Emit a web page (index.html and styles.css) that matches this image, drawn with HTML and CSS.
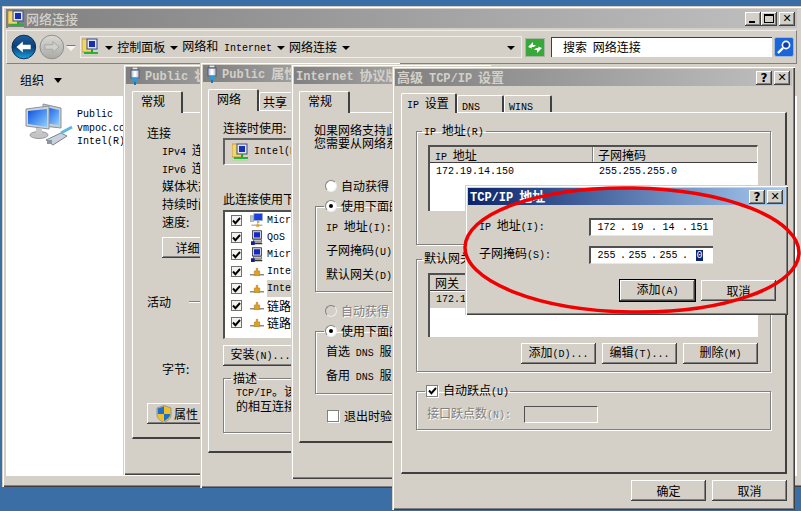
FILE: index.html
```html
<!DOCTYPE html>
<html lang="zh-CN">
<head>
<meta charset="utf-8">
<title>网络连接</title>
<link rel="stylesheet" href="styles.css">
</head>
<body>
<svg class="defs" width="0" height="0">
  <defs>
    <linearGradient id="gBlue" x1="0" y1="0" x2="0" y2="1"><stop offset="0" stop-color="#1d5f9e"/><stop offset=".5" stop-color="#0b3f78"/><stop offset="1" stop-color="#18a4e0"/></linearGradient>
    <linearGradient id="gGrey" x1="0" y1="0" x2="0" y2="1"><stop offset="0" stop-color="#d8d8d4"/><stop offset="1" stop-color="#a9a9a5"/></linearGradient>
    <linearGradient id="gScreen" x1="0" y1="0" x2="1" y2="1"><stop offset="0" stop-color="#0a4fe0"/><stop offset="1" stop-color="#8fd0ff"/></linearGradient>
    <symbol id="i-netfolder" viewBox="0 0 16 20">
      <path d="M0 2h5l1 1h4v12H0z" fill="#f4d56a" stroke="#a88a30" stroke-width=".7"/>
      <rect x="5" y="2" width="10" height="10" fill="#dfe6f2" stroke="#3a4a80"/>
      <rect x="7" y="4" width="6" height="6" fill="#1a2fb0"/>
      <rect x="9" y="12" width="2" height="3" fill="#28a030"/>
      <rect x="2" y="15" width="14" height="2" fill="#28b038"/>
      <rect x="0" y="18" width="16" height="1" fill="#b8d8a8"/>
    </symbol>
    <symbol id="i-adapter" viewBox="0 0 10 18">
      <rect x="2" y="0" width="6" height="3" fill="#e8e8e8" stroke="#667"/>
      <rect x="1" y="3" width="8" height="8" fill="#c8d4e0" stroke="#557"/>
      <rect x="3.5" y="4" width="3" height="6" fill="#fff"/>
      <path d="M2 11h6l-1 4H3z" fill="#2c9ad8"/>
      <rect x="4" y="15" width="2" height="3" fill="#1f74b4"/>
    </symbol>
    <symbol id="i-stack" viewBox="0 0 13 10">
      <path d="M0 8h13" stroke="#8a8a90" stroke-width="1.4"/>
      <path d="M4 8.800V4.500h1.800V2h1.400v2.500H9v4.300z" fill="#e0a020" stroke="#a87810" stroke-width=".5"/>
    </symbol>
    <symbol id="i-pc" viewBox="0 0 16 20">
      <rect x="2" y="1" width="12" height="11" fill="#cfd3da" stroke="#222"/>
      <rect x="4" y="3" width="8" height="7" fill="#1528c8"/>
      <rect x="3" y="13" width="11" height="3" fill="#c8c8c8" stroke="#222" stroke-width=".7"/>
      <rect x="0" y="15" width="5" height="5" fill="#1020a0"/>
      <rect x="4" y="17" width="11" height="2" fill="#333"/>
    </symbol>
    <symbol id="i-client" viewBox="0 0 18 18">
      <rect x="0" y="3" width="5" height="7" fill="#b8c4c8" stroke="#6a7a70" stroke-width=".6"/>
      <rect x="5" y="0" width="11" height="9" fill="#1e3fe0" stroke="#9ab" stroke-width=".8"/>
      <rect x="9" y="9" width="3" height="3" fill="#a8a8a0"/>
      <path d="M2 15h14" stroke="#888" stroke-width="1.200"/>
      <path d="M8 17v-3h1.500v-2h1v2H12v3z" fill="#e0a020"/>
    </symbol>
    <symbol id="i-check" viewBox="0 0 9 8">
      <path d="M1 3.500 3.400 6.200 8 1" fill="none" stroke="#000" stroke-width="1.900"/>
    </symbol>
  </defs>
</svg>

<section class="win main">
  <header class="title main-title">
    <svg class="ic-t"><use href="#i-netfolder"/></svg>
    <span class="title-text">网络连接</span>
    <div class="caps">
      <span class="cap"><i class="glyph-min"></i></span>
      <span class="cap"><i class="glyph-max"></i></span>
      <span class="cap cap-gap">✕</span>
    </div>
  </header>
  <div class="toolbar">
    <svg class="nav-back" width="26" height="26" viewBox="0 0 26 26">
      <circle cx="13" cy="13" r="12" fill="url(#gBlue)" stroke="#0a2c58"/>
      <path d="M5.500 13 12 7.500v3.200h8v4.600h-8v3.200z" fill="#fff"/>
    </svg>
    <svg class="nav-fwd" width="26" height="26" viewBox="0 0 26 26">
      <circle cx="13" cy="13" r="12" fill="url(#gGrey)" stroke="#8e8e8a"/>
      <path d="M20.500 13 14 7.500v3.200H6v4.600h8v3.200z" fill="#cfcfcb" stroke="#9a9a96" stroke-width=".7"/>
    </svg>
    <span class="nav-drop"></span>
    <div class="address">
      <svg class="ic-addr"><use href="#i-netfolder"/></svg>
      <span class="crumb-arrow first"></span><span class="crumb">控制面板</span>
      <span class="crumb-arrow"></span><span class="crumb">网络和 <span class="la">Internet</span></span>
      <span class="crumb-arrow"></span><span class="crumb">网络连接</span>
      <span class="crumb-arrow"></span>
      <span class="crumb-arrow addr-drop"></span>
    </div>
    <svg class="refresh" width="20" height="19" viewBox="0 0 20 19">
      <rect x=".5" y=".5" width="19" height="18" fill="#37a83a" stroke="#a8b8a0"/>
      <path d="M3 9 8 4v3h3l-2 2H6.500l.5 1.500zM17 10l-5 5v-3H9l2-2h2.500L13 8.500z" fill="#fff"/>
    </svg>
    <div class="search">搜索 网络连接</div>
    <svg class="search-btn" width="20" height="20" viewBox="0 0 20 20">
      <rect x=".5" y=".5" width="19" height="19" rx="2" fill="#1a66d8" stroke="#9fb8dc"/>
      <circle cx="12" cy="8" r="3.600" fill="#103aa8" stroke="#fff" stroke-width="1.600"/>
      <path d="M9 11 4 16" stroke="#fff" stroke-width="2.400"/>
    </svg>
  </div>
  <div class="orgbar"><span>组织</span><span class="org-arrow"></span></div>
  <div class="files">
    <svg class="net-big" width="48" height="48" viewBox="0 0 48 48">
      <path d="M18 1 36 5v20l-18-2z" fill="#c4ccd4" stroke="#8a929a"/>
      <path d="M20 4 34 7v15l-14-2z" fill="url(#gScreen)"/>
      <path d="M1 6 24 3v23L1 23z" fill="#cdd3da" stroke="#8a929a"/>
      <path d="M3 8 22 6v18L3 21z" fill="url(#gScreen)"/>
      <ellipse cx="14" cy="32" rx="9" ry="3.500" fill="#c4c4c4" stroke="#9a9a9a"/>
      <rect x="11" y="25" width="6" height="6" fill="#c8c8c8"/>
      <path d="M21 37 36 30l6 3-14 9z" fill="#c9d2dc" stroke="#7a8490"/>
      <path d="M22 37h5v4h-5z" fill="#8a96a4"/>
      <path d="M36 30 47 24" stroke="#5cb8e6" stroke-width="3"/>
    </svg>
    <div class="file-text">
      <div class="la">Public</div>
      <div class="la">vmpoc.com</div>
      <div class="la">Intel(R)</div>
    </div>
  </div>
</section>

<section class="win w1">
  <header class="title"><svg class="ic-plug"><use href="#i-adapter"/></svg><span class="title-text"><span class="la">Public</span> 状态</span></header>
  <div class="tabs"><span class="tab on">常规</span></div>
  <div class="page p1">
    <div class="line">连接</div>
    <div class="stat"><span class="la">IPv4</span> 连接:</div>
    <div class="stat"><span class="la">IPv6</span> 连接:</div>
    <div class="stat">媒体状态:</div>
    <div class="stat">持续时间:</div>
    <div class="stat">速度:</div>
    <button class="btn btn-detail">详细信息</button>
    <div class="line ruled">活动</div>
    <div class="stat bytes">字节:</div>
    <button class="btn btn-prop">
      <svg width="16" height="18" viewBox="0 0 16 18"><path d="M8 .5 15 3v7c0 4-4 6-7 7.500C5 16 1 14 1 10V3z" fill="#f0c020" stroke="#8a98a8"/><path d="M8 1.500V9H1.800V3.500zM8 9h6.200c0 3.500-3.400 5.500-6.200 7z" fill="#1f6fd0"/></svg>
      <span>属性</span>
    </button>
  </div>
</section>

<section class="win w2">
  <header class="title"><svg class="ic-plug"><use href="#i-adapter"/></svg><span class="title-text"><span class="la">Public</span> 属性</span></header>
  <div class="tabs"><span class="tab on">网络</span><span class="tab">共享</span></div>
  <div class="page p2">
    <div class="line">连接时使用:</div>
    <div class="adapter-box">
      <svg class="ic-t"><use href="#i-netfolder"/></svg>
      <span class="la">Intel(R)</span>
    </div>
    <div class="line list-cap">此连接使用下列项目</div>
    <ul class="items">
      <li><span class="cb"><svg><use href="#i-check"/></svg></span><svg class="it"><use href="#i-client"/></svg><span class="la">Microsoft</span></li>
      <li><span class="cb"><svg><use href="#i-check"/></svg></span><svg class="it"><use href="#i-pc"/></svg><span class="la">QoS</span></li>
      <li><span class="cb"><svg><use href="#i-check"/></svg></span><svg class="it"><use href="#i-pc"/></svg><span class="la">Microsoft</span></li>
      <li><span class="cb"><svg><use href="#i-check"/></svg></span><svg class="it"><use href="#i-stack"/></svg><span class="la">Internet</span></li>
      <li><span class="cb"><svg><use href="#i-check"/></svg></span><svg class="it"><use href="#i-stack"/></svg><span class="la sel">Internet</span></li>
      <li><span class="cb"><svg><use href="#i-check"/></svg></span><svg class="it"><use href="#i-stack"/></svg><span>链路层</span></li>
      <li><span class="cb"><svg><use href="#i-check"/></svg></span><svg class="it"><use href="#i-stack"/></svg><span>链路层</span></li>
    </ul>
    <button class="btn btn-install">安装<span class="la">(N)...</span></button>
    <fieldset class="grp grp-desc">
      <legend>描述</legend>
      <p class="desc"><span class="la">TCP/IP</span>。该协议<br>的相互连接</p>
    </fieldset>
  </div>
</section>

<section class="win w3">
  <header class="title"><span class="title-text"><span class="la">Internet</span> 协议版本</span></header>
  <div class="tabs"><span class="tab on">常规</span></div>
  <div class="page p3">
    <p class="intro">如果网络支持此功能<br>您需要从网络系统</p>
    <div class="radio-row r-auto"><span class="radio"></span><span>自动获得</span></div>
    <fieldset class="grp grp-ip">
      <legend class="radio-row"><span class="radio on"></span><span>使用下面的</span></legend>
      <div class="frow"><span class="la">IP</span> 地址<span class="la">(I):</span></div>
      <div class="frow">子网掩码<span class="la">(U):</span></div>
      <div class="frow">默认网关<span class="la">(D):</span></div>
    </fieldset>
    <div class="radio-row r-dns off"><span class="radio"></span><span>自动获得</span></div>
    <fieldset class="grp grp-dns">
      <legend class="radio-row"><span class="radio on"></span><span>使用下面的</span></legend>
      <div class="frow">首选 <span class="la">DNS</span> 服务器</div>
      <div class="frow">备用 <span class="la">DNS</span> 服务器</div>
    </fieldset>
    <div class="radio-row r-exit"><span class="cb light"></span><span>退出时验证</span></div>
  </div>
</section>

<section class="win w4">
  <header class="title">
    <span class="title-text">高级 <span class="la">TCP/IP</span> 设置</span>
    <div class="caps"><span class="cap q">?</span><span class="cap cap-gap">✕</span></div>
  </header>
  <div class="tabs">
    <span class="tab on"><span class="la">IP</span> 设置</span>
    <span class="tab t-dns"><span class="la">DNS</span></span>
    <span class="tab t-wins"><span class="la">WINS</span></span>
  </div>
  <div class="page p4">
    <fieldset class="grp g-ip">
      <legend><span class="la">IP</span> 地址<span class="la">(R)</span></legend>
      <div class="list l-ip">
        <div class="lhead"><span class="c1"><span class="la">IP</span> 地址</span><span class="c2">子网掩码</span></div>
        <div class="lrow"><span class="c1 num">172.19.14.150</span><span class="c2 num">255.255.255.0</span></div>
      </div>
    </fieldset>
    <fieldset class="grp g-gw">
      <legend>默认网关<span class="la">(F):</span></legend>
      <div class="list l-gw">
        <div class="lhead"><span class="c1">网关</span><span class="c2">跃点数</span></div>
        <div class="lrow picked"><span class="c1 num">172.19.14.1</span><span class="c2 num">自动</span></div>
      </div>
      <div class="btn-row">
        <button class="btn">添加<span class="la">(D)...</span></button>
        <button class="btn">编辑<span class="la">(T)...</span></button>
        <button class="btn">删除<span class="la">(M)</span></button>
      </div>
    </fieldset>
    <fieldset class="grp g-hop">
      <legend class="radio-row"><span class="cb light"><svg><use href="#i-check"/></svg></span><span>自动跃点<span class="la">(U)</span></span></legend>
      <div class="hop-row">
        <span class="hop-label">接口跃点数<span class="la">(N):</span></span>
        <span class="hop-input"></span>
      </div>
    </fieldset>
  </div>
  <div class="foot">
    <button class="btn">确定</button>
    <button class="btn">取消</button>
  </div>
</section>

<section class="win dlg">
  <header class="title active">
    <span class="title-text"><span class="la">TCP/IP</span> 地址</span>
    <div class="caps"><span class="cap q">?</span><span class="cap cap-gap">✕</span></div>
  </header>
  <div class="dlg-row first">
    <label class="dlg-label"><span class="la">IP</span> 地址<span class="la">(I):</span></label>
    <div class="ipbox">
      <span class="oct">172</span><span class="dot">.</span><span class="oct">19</span><span class="dot">.</span><span class="oct">14</span><span class="dot">.</span><span class="oct">151</span>
    </div>
  </div>
  <div class="dlg-row">
    <label class="dlg-label">子网掩码<span class="la">(S):</span></label>
    <div class="ipbox">
      <span class="oct">255</span><span class="dot">.</span><span class="oct">255</span><span class="dot">.</span><span class="oct">255</span><span class="dot">.</span><span class="oct"><b class="hl">0</b></span>
    </div>
  </div>
  <div class="dlg-foot">
    <button class="btn default">添加<span class="la">(A)</span></button>
    <button class="btn">取消</button>
  </div>
</section>

<svg class="mark" width="801" height="511" viewBox="0 0 801 511">
  <ellipse cx="632" cy="250" rx="167" ry="62" transform="rotate(1 632 250)" fill="none" stroke="#f00000" stroke-width="3.500"/>
</svg>
</body>
</html>
```

FILE: styles.css
```css
* { box-sizing: border-box; }
html, body { margin: 0; height: 100%; }
body {
  position: relative;
  width: 801px;
  height: 511px;
  overflow: hidden;
  background: #3a6ea5;
  font-family: "Noto Sans CJK SC", "Liberation Sans", sans-serif;
  font-size: 12px;
  line-height: 16px;
  word-spacing: 3px;
  color: #000;
}
.defs { position: absolute; }
.la { font-family: "Liberation Mono", monospace; font-size: 10px; word-spacing: 0; }
p { margin: 0; }
ul { margin: 0; padding: 0; list-style: none; }

.win {
  position: absolute;
  display: flex;
  flex-direction: column;
  padding: 3px;
  background: #d4d0c8;
  box-shadow: inset 1px 1px #d4d0c8, inset 2px 2px #fff, inset -1px -1px #404040, inset -2px -2px #808080;
}
.main { left: 2px; top: 6px; width: 805px; height: 481px; padding: 3px 10px 11px 4px; }
.w1 { left: 123px; top: 64px; width: 200px; height: 411px; padding: 3px 0 0 3px; }
.w2 { left: 200px; top: 62px; width: 200px; height: 426px; padding: 3px 0 0 3px; }
.w3 { left: 291px; top: 64px; width: 200px; height: 415px; padding: 3px 0 0 3px; }
.w4 { left: 392px; top: 66px; width: 403px; height: 444px; }
.dlg { left: 465px; top: 185px; width: 323px; height: 130px; }

.title {
  flex: none;
  display: flex;
  align-items: center;
  height: 17px;
  padding-left: 2px;
  background: linear-gradient(90deg, #808080, #c0c0c0);
  color: #d4d0c8;
  font-size: 13px;
  font-weight: 700;
}
.title .la { font-size: 12px; }
.title.active { background: linear-gradient(90deg, #0a246a, #a6caf0); color: #fff; }
.main-title { height: 19px; font-weight: 500; }
.ic-t { width: 16px; height: 20px; margin-right: 2px; flex: none; }
.ic-plug { width: 10px; height: 18px; margin: 0 5px 0 2px; flex: none; }
.caps { margin-left: auto; display: flex; padding-right: 2px; }
.cap {
  width: 16px;
  height: 14px;
  display: flex;
  align-items: center;
  justify-content: center;
  background: #d4d0c8;
  color: #000;
  font: 700 11px/14px "DejaVu Sans", sans-serif;
  box-shadow: inset -1px -1px #404040, inset 1px 1px #fff, inset -2px -2px #808080;
}
.cap-gap { margin-left: 2px; }
.q { font-size: 12px; }
.glyph-min { width: 6px; height: 2px; background: #000; margin-top: 7px; margin-right: 3px; }
.glyph-max { width: 10px; height: 9px; border: 1px solid #000; border-top-width: 2px; }

.toolbar {
  flex: none;
  display: flex;
  align-items: center;
  height: 34px;
  margin-top: 2px;
  padding: 0 2px 0 4px;
  border: 1px solid #f0eee8;
  border-right-color: #808080;
  border-bottom-color: #808080;
}
.nav-fwd { margin-left: 2px; }
.nav-drop {
  width: 0;
  height: 0;
  margin: 3px 2px 0 2px;
  border: 5px solid transparent;
  border-top: 5px solid #f4f4f4;
  border-bottom: 0;
  filter: drop-shadow(0 -1px #777);
}
.address {
  display: flex;
  align-items: center;
  width: 448px;
  height: 22px;
  margin-left: 2px;
  border: 1px solid #efede6;
  white-space: nowrap;
}
.ic-addr { width: 16px; height: 20px; margin-left: 1px; flex: none; }
.crumb-arrow { width: 0; height: 0; margin: 2px 4px 0 5px; border: 4px solid transparent; border-top: 4px solid #000; border-bottom: 0; }
.crumb-arrow.first { margin-left: 7px; }
.addr-drop { margin-left: auto; margin-right: 6px; }
.refresh { margin-left: 3px; flex: none; }
.search {
  width: 221px;
  height: 20px;
  margin-left: 6px;
  padding-left: 11px;
  background: #fff;
  border-top: 1px solid #404040;
  border-left: 1px solid #404040;
  line-height: 18px;
  flex: none;
}
.search-btn { margin-left: 2px; flex: none; }
.orgbar { flex: none; display: flex; align-items: center; height: 32px; padding-left: 14px; }
.org-arrow { margin-left: 10px; border: 4px solid transparent; border-top: 5px solid #000; border-bottom: 0; }
.files { flex: 1; display: flex; background: #fff; padding: 7px 0 0 19px; }
.net-big { flex: none; }
.file-text { margin: 5px 0 0 4px; line-height: 13.500px; }

.tabs { flex: none; display: flex; align-items: flex-end; height: 21px; margin: 7px 0 0 6px; }
.tab {
  height: 18px;
  width: 41px;
  padding-left: 3px;
  border-top: 1px solid #fff;
  border-left: 1px solid #fff;
  border-right: 2px solid #404040;
  border-radius: 2px 2px 0 0;
  line-height: 17px;
  white-space: nowrap;
  background: #d4d0c8;
}
.tab.on { height: 22px; width: 51px; padding-left: 8px; line-height: 18px; position: relative; z-index: 1; margin-bottom: -1px; }
.page {
  flex: none;
  border-top: 1px solid #fff;
  border-left: 1px solid #fff;
  border-right: 2px solid #404040;
  border-bottom: 2px solid #404040;
}
.w1 .page { margin-left: 6px; height: 327px; padding: 12px 0 0 14px; }
.w1 .tabs { margin-left: 6px; }
.w2 .tabs { margin-left: 5px; }
.w2 .page { margin-left: 5px; height: 343px; padding: 9px 0 0 14px; }
.w3 .tabs { margin-left: 5px; }
.w3 .page { margin-left: 5px; height: 331px; padding: 10px 0 0 15px; }
.w4 .tabs { margin-left: 6px; height: 19px; }
.w4 .tab { height: 17px; width: 48px; padding-left: 4px; }
.w4 .tab.on { height: 20px; width: 56px; padding-left: 5px; line-height: 17px; }
.w4 .tab.t-dns { width: 47px; }
.w4 .page { margin-left: 6px; width: 386px; height: 362px; padding: 10px 0 0 14px; }

.line { height: 16px; white-space: nowrap; }
.stat { height: 18px; margin-left: 15px; line-height: 18px; white-space: nowrap; }
.btn {
  display: block;
  width: 75px;
  height: 21px;
  padding: 0;
  border: 0;
  background: #d4d0c8;
  color: #000;
  font: inherit;
  text-align: center;
  white-space: nowrap;
  box-shadow: inset -1px -1px #404040, inset 1px 1px #fff, inset -2px -2px #808080;
}
.btn-detail { margin: 6px 0 0 15px; }
.ruled { display: flex; align-items: center; margin-top: 36px; }
.ruled::after { content: ""; flex: 1; height: 2px; margin-left: 18px; background: linear-gradient(#808080 50%, #fff 50%); }
.bytes { margin-top: 50px; }
.btn-prop { display: flex; align-items: center; gap: 2px; margin-top: 25px; padding-left: 9px; }

.adapter-box {
  display: flex;
  align-items: center;
  height: 27px;
  margin-top: 2px;
  padding-left: 7px;
  background: #d4d0c8;
  border-top: 2px solid #606060;
  border-left: 2px solid #606060;
  border-bottom: 1px solid #fff;
  gap: 4px;
}
.list-cap { margin-top: 26px; }
.items {
  height: 129px;
  margin-top: 3px;
  background: #fff;
  border-top: 2px solid #505050;
  border-left: 2px solid #505050;
  border-bottom: 1px solid #d4d0c8;
}
.items li { display: flex; align-items: center; height: 17px; padding-left: 6px; white-space: nowrap; }
.cb {
  flex: none;
  display: flex;
  align-items: center;
  justify-content: center;
  width: 11px;
  height: 11px;
  background: #f4f2ee;
  border: 1px solid #707070;
}
.cb svg { width: 9px; height: 8px; }
.cb.light { width: 12px; height: 12px; background: #fff; border-color: #808080; box-shadow: 1px 1px #fff; }
.it { flex: none; width: 14px; height: 15px; margin: 0 3px 0 8px; }
.sel { background: #d4d0c8; align-self: stretch; line-height: 17px; padding-right: 60px; }
.btn-install { margin-top: 6px; }

.grp { min-width: 0; margin: 0; padding: 0; border: 1px solid #808080; box-shadow: inset 1px 1px #fff, 1px 1px #fff; }
.grp legend { padding: 0 2px; margin-left: 7px; line-height: 14px; white-space: nowrap; }
.g-ip legend, .g-gw legend { margin-left: 5px; }
.grp-desc { height: 62px; margin-top: 5px; }
.desc { padding: 0 0 0 12px; line-height: 12px; white-space: nowrap; }

.intro { margin-left: -1px; line-height: 13px; white-space: nowrap; }
.radio-row { display: flex; align-items: center; height: 16px; gap: 4px; white-space: nowrap; }
.radio {
  flex: none;
  width: 12px;
  height: 12px;
  border-radius: 50%;
  background: #fff;
  border: 1px solid #808080;
  border-right-color: #eee;
  border-bottom-color: #eee;
  display: flex;
  align-items: center;
  justify-content: center;
}
.radio.on::after { content: ""; width: 4px; height: 4px; border-radius: 50%; background: #000; }
.r-auto { margin: 29px 0 0 10px; }
.grp legend.radio-row { margin-left: 8px; padding: 0 1px; height: 16px; display: flex; }
.grp-ip { height: 94px; margin-top: 4px; }
.frow { height: 24px; padding-left: 10px; line-height: 24px; white-space: nowrap; }
.r-dns { margin: 11px 0 0 10px; }
.off { color: #808080; text-shadow: 1px 1px #fff; }
.off .radio { background: #d4d0c8; }
.grp-dns { height: 71px; margin-top: 4px; }
.r-exit { margin: 14px 0 0 12px; }
.r-exit, .g-hop .radio-row { gap: 5px; }

.g-ip { width: 355px; height: 122px; }
.g-gw { width: 355px; height: 121px; margin-top: 6px; }
.g-hop { width: 355px; height: 47px; margin-top: 11px; }
.list { margin: 7px 0 0 11px; width: 330px; background: #fff; border-top: 2px solid #505050; border-left: 2px solid #505050; border-right: 1px solid #fff; }
.l-ip { height: 66px; margin-top: 5px; }
.l-gw { height: 64px; margin-top: 5px; }
.lhead { display: flex; height: 16px; background: #d4d0c8; line-height: 16px; border-bottom: 1px solid #404040; }
.c1 { display: block; width: 163px; padding-left: 5px; flex: none; }
.lhead .c1 { border-right: 1px solid #808080; box-shadow: 1px 0 #fff; }
.c2 { display: block; padding-left: 5px; }
.lrow { display: flex; height: 16px; margin-top: 1px; line-height: 16px; white-space: nowrap; }
.num { font-family: "Liberation Mono", monospace; font-size: 10px; }
.lrow .c1.num { padding-left: 6px; }
.c2.num { padding-left: 6px; }
.picked .c1 { background: #d4d0c8; }
.btn-row { display: flex; justify-content: flex-end; gap: 6px; margin: 6px 12px 0 0; }
.hop-row { display: flex; align-items: center; height: 17px; margin-top: 7px; padding-left: 10px; color: #808080; text-shadow: 1px 1px #fff; }
.hop-label { width: 97px; white-space: nowrap; }
.hop-input { width: 74px; height: 17px; border-top: 1px solid #505050; border-left: 1px solid #505050; border-right: 1px solid #fff; border-bottom: 1px solid #fff; }
.foot { display: flex; justify-content: flex-end; gap: 6px; margin-top: 6px; padding-right: 5px; }

.dlg-row { display: flex; align-items: center; height: 17px; padding-left: 11px; margin-top: 11px; }
.dlg-row.first { margin-top: 13px; }
.dlg-label { width: 110px; white-space: nowrap; }
.ipbox { display: flex; width: 124px; height: 18px; padding-left: 2px; background: #fff; border-top: 2px solid #505050; border-left: 2px solid #505050; border-bottom: 1px solid #e8e8e8; font-size: 10px; line-height: 16px; font-family: "Liberation Mono", monospace; }
.oct { width: 27px; text-align: center; }
.dot { width: 4px; text-align: center; }
.hl { background: #0a246a; color: #fff; font-weight: 400; }
.dlg-foot { display: flex; justify-content: flex-end; gap: 6px; margin-top: 17px; padding-right: 9px; }
.default { box-shadow: 0 0 0 1px #000, inset -1px -1px #404040, inset 1px 1px #fff, inset -2px -2px #808080; }

.mark { position: absolute; left: 0; top: 0; pointer-events: none; }
```
